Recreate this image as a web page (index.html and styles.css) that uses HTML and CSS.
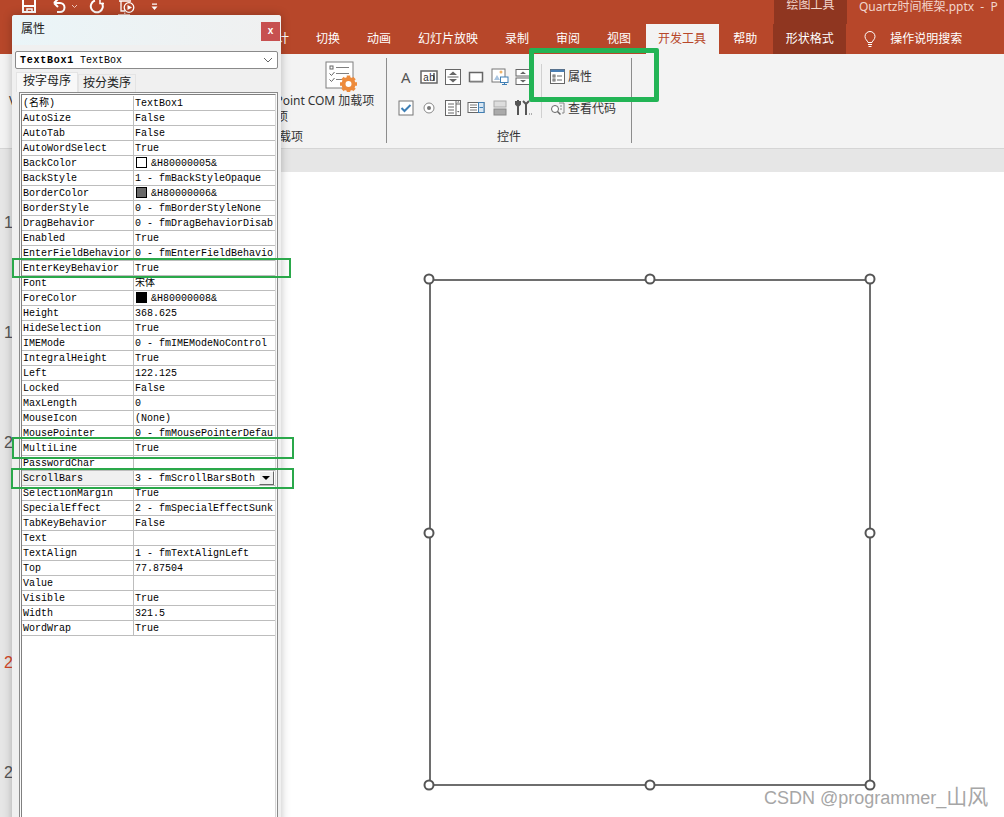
FILE: index.html
```html
<!DOCTYPE html>
<html>

<head>
  <title>Quartz时间框架.pptx - PowerPoint</title>
  <meta charset="UTF-8">
  <link rel="stylesheet" href="styles.css">
</head>

<body>
  <div class="title_bar">
    <svg class="qat_icons" viewBox="0 0 170 16" width="170" height="16">
      <g fill="none" stroke="#fff" stroke-width="2">
        <path d="M23 -2H35V12H23Z" />
        <path d="M23 6H35" />
        <path d="M27 12V9H32V12" stroke-width="1.5" />
        <path d="M54 3L58 -1M54 3L58 7M54 3H60a4.5 4.5 0 0 1 0 9H57" />
        <path d="M95 0.6A6 6 0 1 0 101.8 3" />
        <path d="M100 -1V3.5H104" stroke-width="1.5" />
        <path d="M72 5l2.5 2.5l2.5 -2.5" stroke="#f0c8bc" stroke-width="1" />
        <path d="M119 1H131M121 1V11H125" stroke-width="1.3" />
        <circle cx="129" cy="7.5" r="4.8" stroke-width="1.3" />
      </g>
      <path d="M127.5 5L132 7.5L127.5 10Z" fill="#fff" />
      <path d="M124 12.5h1.5v2.5h-1.5zM118 14h12v1h-12z" fill="#e0b8ac" />
      <path d="M152 3.5h5v1.2h-5zM151.5 6.5h6L154.5 10Z" fill="#fff" />
    </svg>
    <div class="context_title">绘图工具</div>
    <div class="file_title">Quartz时间框架.pptx &nbsp;-&nbsp; P</div>
  </div>

  <div class="tab_bar">
    <div class="tab">设计</div>
    <div class="tab">切换</div>
    <div class="tab">动画</div>
    <div class="tab">幻灯片放映</div>
    <div class="tab">录制</div>
    <div class="tab">审阅</div>
    <div class="tab">视图</div>
    <div class="tab tab_active">开发工具</div>
    <div class="tab">帮助</div>
    <div class="tab tab_context">形状格式</div>
    <svg class="bulb_icon" viewBox="0 0 12 17" width="12" height="17">
      <path d="M4 11.5C3.5 9.5 1 8.500 1 5.500a5 5 0 0 1 10 0C11 8.500 8.500 9.500 8 11.500Z" fill="none" stroke="#fff" />
      <path d="M4 13.500h4M4.500 15.500h3" stroke="#fff" />
    </svg>
    <div class="tab_search">操作说明搜索</div>
  </div>

  <div class="ribbon">
    <div class="group group_code">
      <div class="group_body"><span class="code_letter">V</span></div>
      <div class="group_label">代码</div>
    </div>

    <div class="group group_addin">
      <div class="group_body addin_body">
        <div class="big_button button_ppt">
          <div class="big_icon"></div>
          <div>PowerPoint<br>加载项</div>
        </div>
        <div class="big_button button_com">
          <svg class="big_icon" viewBox="0 0 32 32" width="32" height="32">
            <rect x="1" y="2" width="27" height="26" fill="#fff" stroke="#7f7f7f" />
            <rect x="5" y="6" width="3" height="3" fill="none" stroke="#666" />
            <path d="M11 7.500H24M11 13.500H24M11 19.500H18" stroke="#7f7f7f" />
            <path d="M4.500 13.500l2 2l3 -3.500M4.500 19.500l2 2l3 -3.500" fill="none" stroke="#666" />
            <circle cx="23.500" cy="24" r="5" fill="none" stroke="#ed8b3c" stroke-width="4" />
            <path d="M23.500 15.500v3M23.500 29.500v3M15 24h3M29 24h3M17.500 18l2 2M27.500 28l2 2M29.500 18l-2 2M19.500 28l-2 2" stroke="#ed8b3c" stroke-width="3.500" />
          </svg>
          <div>COM 加载项</div>
        </div>
      </div>
      <div class="group_label">加载项</div>
    </div>

    <div class="group group_controls">
      <div class="group_body">
        <div class="control_grid">
          <div class="control_icon control_letter">A</div>
          <svg class="control_icon" viewBox="0 0 18 18"><rect x="1" y="3" width="16" height="12" fill="#fff" stroke="#666" stroke-width="1.500" /><text x="3" y="12.500" class="icon_text">ab</text><path d="M14 5v8" stroke="#000" /></svg>
          <svg class="control_icon" viewBox="0 0 18 18"><rect x="1.500" y="1.500" width="15" height="15" fill="#fff" stroke="#666" /><path d="M5 7L9 3.500L13 7ZM5 11L9 14.500L13 11Z" fill="#666" /><path d="M3.500 9H14.500" stroke="#666" /></svg>
          <svg class="control_icon" viewBox="0 0 18 18"><rect x="2.500" y="4.500" width="13" height="9" fill="#fff" stroke="#666" stroke-width="1.500" /><path d="M3 14H16" stroke="#999" /></svg>
          <svg class="control_icon" viewBox="0 0 18 18"><rect x="1" y="1" width="13" height="13" fill="#fff" stroke="#777" /><path d="M3 12L6 7L9 12Z" fill="#a8c4e0" /><circle cx="10" cy="4" r="1.500" fill="#f0b46a" /><rect x="9.500" y="9" width="7.500" height="5.500" fill="#fff" stroke="#3f7fb5" /><path d="M11 16.500h5M13.500 14.500v2" stroke="#3f7fb5" /></svg>
          <svg class="control_icon" viewBox="0 0 18 18"><rect x="2" y="1.500" width="14" height="6.500" fill="#fff" stroke="#666" /><rect x="2" y="10" width="14" height="6.500" fill="#fff" stroke="#666" /><path d="M6 6L9 3.500L12 6ZM6 12L9 14.500L12 12Z" fill="#666" /></svg>

          <svg class="control_icon" viewBox="0 0 18 18"><rect x="2" y="2" width="14" height="14" fill="#fff" stroke="#777" /><path d="M4.500 9l3 3l6 -6" fill="none" stroke="#3f7fb5" stroke-width="2" /></svg>
          <svg class="control_icon" viewBox="0 0 18 18"><circle cx="9" cy="9" r="5" fill="#fff" stroke="#888" /><circle cx="9" cy="9" r="2" fill="#777" /></svg>
          <svg class="control_icon" viewBox="0 0 18 18"><rect x="1.500" y="1.500" width="15" height="15" fill="#fff" stroke="#666" /><path d="M4 5H10M4 8H10M4 11H10M4 14H10M12 1.500V16.500M12 5H16" stroke="#666" /><path d="M13 3.500h2.500L14.250 2ZM13 12h2.500l-1.250 1.500Z" fill="#666" /></svg>
          <svg class="control_icon" viewBox="0 0 18 18"><rect x="1" y="3.500" width="16" height="10" fill="#fff" stroke="#666" /><path d="M3 6H10M3 8.500H10M3 11H10" stroke="#777" /><rect x="11.500" y="3.500" width="5.500" height="10" fill="#d8e6f2" stroke="#3f7fb5" /><path d="M12.500 8.500h3.500" stroke="#3f7fb5" /></svg>
          <svg class="control_icon" viewBox="0 0 18 18"><rect x="3" y="2" width="12" height="6" fill="#ddd" stroke="#aaa" /><rect x="3" y="10" width="12" height="6" fill="#aaa" stroke="#888" /></svg>
          <svg class="control_icon" viewBox="0 0 18 18"><path d="M4 1v5M2 2v3l2 2l2 -2V2M4 7v9" fill="none" stroke="#555" stroke-width="2" /><path d="M9 2l3 3l3 -3M12 5v11" fill="none" stroke="#555" stroke-width="2" /><path d="M15 15h1M17 15h1" stroke="#666" /></svg>
        </div>
        <div class="command_sep"></div>
        <div class="command_list">
          <div class="command">
            <svg viewBox="0 0 15 15" width="15" height="15"><rect x="0.500" y="0.500" width="14" height="14" fill="#fff" stroke="#666" /><rect x="0.500" y="0.500" width="14" height="2.500" fill="#4a7fb5" /><rect x="3" y="6" width="2" height="2" fill="none" stroke="#666" /><rect x="3" y="10" width="2" height="2" fill="none" stroke="#666" /><path d="M7 7H12M7 11H12" stroke="#666" /></svg>
            <span>属性</span>
          </div>
          <div class="command">
            <svg viewBox="0 0 15 15" width="15" height="15"><circle cx="5" cy="8" r="3.500" fill="#fff" stroke="#666" /><path d="M7.500 10.500L10.500 13.500" stroke="#666" stroke-width="1.500" /><path d="M9 2H14V12H12M10 5H12M10 8H12" fill="none" stroke="#888" /></svg>
            <span>查看代码</span>
          </div>
        </div>
      </div>
      <div class="group_label">控件</div>
    </div>
  </div>

  <div class="workspace">
    <div class="slide_rail">
      <div class="slide_num">1</div>
      <div class="slide_num">1</div>
      <div class="slide_num">2</div>
      <div class="slide_num"></div>
      <div class="slide_num slide_num_current">2</div>
      <div class="slide_num">2</div>
    </div>
    <div class="workspace_main">
      <div class="top_strip"></div>
      <div class="stage"></div>
    </div>
  </div>

  <!-- selected textbox on the slide -->
  <div class="shape">
    <span class="handle h_tl"></span>
    <span class="handle h_tc"></span>
    <span class="handle h_tr"></span>
    <span class="handle h_ml"></span>
    <span class="handle h_mr"></span>
    <span class="handle h_bl"></span>
    <span class="handle h_bc"></span>
    <span class="handle h_br"></span>
  </div>

  <!-- floating properties window -->
  <div class="prop_window">
    <div class="prop_head">
      <span>属性</span>
      <div class="prop_close">x</div>
    </div>
    <div class="prop_combo">
      <span class="mono"><b>TextBox1</b> TextBox</span>
      <svg viewBox="0 0 10 6" width="10" height="6"><path d="M1 1L5 5L9 1" fill="none" stroke="#666" /></svg>
    </div>
    <div class="prop_tabs">
      <div class="prop_tab prop_tab_active">按字母序</div>
      <div class="prop_tab">按分类序</div>
    </div>
    <div class="prop_frame">
      <div class="prop_list">
        <div class="prop_row"><div class="prop_name">(名称)</div><div class="prop_value">TextBox1</div></div>
        <div class="prop_row"><div class="prop_name">AutoSize</div><div class="prop_value">False</div></div>
        <div class="prop_row"><div class="prop_name">AutoTab</div><div class="prop_value">False</div></div>
        <div class="prop_row"><div class="prop_name">AutoWordSelect</div><div class="prop_value">True</div></div>
        <div class="prop_row"><div class="prop_name">BackColor</div><div class="prop_value"><i class="swatch swatch_white"></i>&amp;H80000005&amp;</div></div>
        <div class="prop_row"><div class="prop_name">BackStyle</div><div class="prop_value">1 - fmBackStyleOpaque</div></div>
        <div class="prop_row"><div class="prop_name">BorderColor</div><div class="prop_value"><i class="swatch swatch_gray"></i>&amp;H80000006&amp;</div></div>
        <div class="prop_row"><div class="prop_name">BorderStyle</div><div class="prop_value">0 - fmBorderStyleNone</div></div>
        <div class="prop_row"><div class="prop_name">DragBehavior</div><div class="prop_value">0 - fmDragBehaviorDisab</div></div>
        <div class="prop_row"><div class="prop_name">Enabled</div><div class="prop_value">True</div></div>
        <div class="prop_row"><div class="prop_name">EnterFieldBehavior</div><div class="prop_value">0 - fmEnterFieldBehavio</div></div>
        <div class="prop_row"><div class="prop_name">EnterKeyBehavior</div><div class="prop_value">True</div></div>
        <div class="prop_row"><div class="prop_name">Font</div><div class="prop_value">宋体</div></div>
        <div class="prop_row"><div class="prop_name">ForeColor</div><div class="prop_value"><i class="swatch swatch_black"></i>&amp;H80000008&amp;</div></div>
        <div class="prop_row"><div class="prop_name">Height</div><div class="prop_value">368.625</div></div>
        <div class="prop_row"><div class="prop_name">HideSelection</div><div class="prop_value">True</div></div>
        <div class="prop_row"><div class="prop_name">IMEMode</div><div class="prop_value">0 - fmIMEModeNoControl</div></div>
        <div class="prop_row"><div class="prop_name">IntegralHeight</div><div class="prop_value">True</div></div>
        <div class="prop_row"><div class="prop_name">Left</div><div class="prop_value">122.125</div></div>
        <div class="prop_row"><div class="prop_name">Locked</div><div class="prop_value">False</div></div>
        <div class="prop_row"><div class="prop_name">MaxLength</div><div class="prop_value">0</div></div>
        <div class="prop_row"><div class="prop_name">MouseIcon</div><div class="prop_value">(None)</div></div>
        <div class="prop_row"><div class="prop_name">MousePointer</div><div class="prop_value">0 - fmMousePointerDefau</div></div>
        <div class="prop_row"><div class="prop_name">MultiLine</div><div class="prop_value">True</div></div>
        <div class="prop_row"><div class="prop_name">PasswordChar</div><div class="prop_value"></div></div>
        <div class="prop_row prop_row_selected"><div class="prop_name">ScrollBars</div><div class="prop_value">3 - fmScrollBarsBoth<div class="prop_drop"></div></div></div>
        <div class="prop_row"><div class="prop_name">SelectionMargin</div><div class="prop_value">True</div></div>
        <div class="prop_row"><div class="prop_name">SpecialEffect</div><div class="prop_value">2 - fmSpecialEffectSunk</div></div>
        <div class="prop_row"><div class="prop_name">TabKeyBehavior</div><div class="prop_value">False</div></div>
        <div class="prop_row"><div class="prop_name">Text</div><div class="prop_value"></div></div>
        <div class="prop_row"><div class="prop_name">TextAlign</div><div class="prop_value">1 - fmTextAlignLeft</div></div>
        <div class="prop_row"><div class="prop_name">Top</div><div class="prop_value">77.87504</div></div>
        <div class="prop_row"><div class="prop_name">Value</div><div class="prop_value"></div></div>
        <div class="prop_row"><div class="prop_name">Visible</div><div class="prop_value">True</div></div>
        <div class="prop_row"><div class="prop_name">Width</div><div class="prop_value">321.5</div></div>
        <div class="prop_row"><div class="prop_name">WordWrap</div><div class="prop_value">True</div></div>
      </div>
    </div>
  </div>

  <!-- green annotation boxes drawn over the screenshot -->
  <div class="mark mark_big"></div>
  <div class="mark mark_enter"></div>
  <div class="mark mark_multi"></div>
  <div class="mark mark_scroll"></div>

  <div class="watermark">CSDN @programmer_<span class="watermark_cjk">山风</span></div>
</body>

</html>
```

FILE: styles.css
```css
html,
body {
  width: 100%;
  height: 100%;
  margin: 0;
  padding: 0;
  overflow: hidden;
}

body {
  position: relative;
  display: flex;
  flex-direction: column;
  background-color: white;
  color: #333;
  font-family: "Noto Sans", "Noto Sans CJK SC", sans-serif;
  font-size: 12px;
}

/* title bar */
.title_bar {
  flex: 0 0 24px;
  display: flex;
  overflow: hidden;
  background-color: #b7472a;
}

.qat_icons {
  flex: 0 0 170px;
}

.context_title {
  margin-left: 604px;
  flex: 0 0 73px;
  text-align: center;
  line-height: 10px;
  color: #f2d5cc;
  background-color: #8f3620;
}

.file_title {
  padding-left: 12px;
  line-height: 14px;
  white-space: nowrap;
  color: #f2d5cc;
}

/* tabs */
.tab_bar {
  flex: 0 0 30px;
  display: flex;
  align-items: stretch;
  gap: 2px;
  padding-left: 252.5px;
  background-color: #b7472a;
  color: white;
  line-height: 30px;
}

.tab {
  padding: 0 12.5px;
  white-space: nowrap;
}

.tab_active {
  background-color: #f3f3f3;
  color: #b7472a;
}

.tab_context {
  margin-left: 1.5px;
  background-color: #8f3620;
}

.bulb_icon {
  margin: 7px 0 0 16px;
}

.tab_search {
  margin-left: 12px;
}

/* ribbon */
.ribbon {
  flex: 0 0 95px;
  box-sizing: border-box;
  display: flex;
  padding-top: 4px;
  background-color: #f3f3f3;
  border-bottom: 1px solid #d5d5d5;
}

.group {
  height: 85px;
  display: flex;
  flex-direction: column;
  box-sizing: border-box;
}

.group_body {
  flex: 0 0 71px;
  height: 71px;
  display: flex;
}

.group_label {
  height: 14px;
  line-height: 16px;
  text-align: center;
}

.group_code {
  flex: 0 0 184px;
}

.code_letter {
  margin: 34px 0 0 9px;
}

.group_addin {
  flex: 0 0 203px;
  border-right: 1px solid #8c8c8c;
}

.addin_body {
  padding: 2px 0 0 56px;
  gap: 6px;
  box-sizing: border-box;
}

.big_button {
  text-align: center;
  line-height: 16px;
  white-space: nowrap;
}

.button_ppt {
  width: 60px;
}

.button_com {
  width: 70px;
}

.big_icon {
  display: block;
  height: 32px;
  width: 32px;
  margin: 0 auto 1px;
}

.group_controls {
  flex: 0 0 245px;
  border-right: 1px solid #8c8c8c;
}

.control_grid {
  display: grid;
  grid-template-columns: repeat(6, 23.5px);
  grid-auto-rows: 31px;
  place-items: center;
  padding: 3px 0 0 7px;
  align-self: flex-start;
}

.control_icon {
  width: 18px;
  height: 18px;
}

.control_letter {
  text-align: center;
  line-height: 18px;
  font-size: 15px;
  color: #555;
}

.icon_text {
  font-family: "Liberation Mono", monospace;
  font-size: 10px;
  fill: #333;
}

.command_sep {
  width: 1px;
  height: 54px;
  margin: 6px 0 0 6px;
  background-color: #d0d0d0;
}

.command_list {
  padding: 2px 0 0 8px;
}

.command {
  display: flex;
  align-items: center;
  gap: 3px;
  height: 32px;
  font-size: 12px;
}

/* workspace */
.workspace {
  flex: 1;
  display: flex;
}

.slide_rail {
  flex: 0 0 12px;
  display: grid;
  grid-auto-rows: 110px;
  align-items: center;
  box-sizing: border-box;
  padding: 19px 0 0 4px;
  overflow: hidden;
  background-color: #e6e6e6;
  color: #555;
  font-family: "Liberation Sans", sans-serif;
  font-size: 16px;
}

.slide_num_current {
  color: #d24726;
}

.workspace_main {
  flex: 1;
  display: flex;
  flex-direction: column;
}

.top_strip {
  flex: 0 0 23px;
  background-color: #e6e6e6;
}

.stage {
  flex: 1;
  background-color: white;
}

/* selected shape */
.shape {
  position: absolute;
  left: 429px;
  top: 279px;
  width: 442px;
  height: 507px;
  box-sizing: border-box;
  border: 2px solid #6e6e6e;
}

.handle {
  position: absolute;
  width: 11px;
  height: 11px;
  box-sizing: border-box;
  border: 2px solid #555;
  border-radius: 50%;
  background-color: white;
  transform: translate(-50%, -50%);
}

.h_tl { left: -2px; top: -2px; }
.h_tc { left: 50%; top: -2px; }
.h_tr { left: calc(100% + 1px); top: -2px; }
.h_ml { left: -2px; top: 50%; }
.h_mr { left: calc(100% + 1px); top: 50%; }
.h_bl { left: -2px; top: calc(100% + 1px); }
.h_bc { left: 50%; top: calc(100% + 1px); }
.h_br { left: calc(100% + 1px); top: calc(100% + 1px); }

/* properties window */
.prop_window {
  position: absolute;
  left: 12px;
  top: 15px;
  width: 269px;
  height: 820px;
  display: flex;
  flex-direction: column;
  border-radius: 3px 3px 0 0;
  background-color: #f0f0f0;
  box-shadow: 0 0 10px rgba(0, 0, 0, 0.25);
}

.prop_head {
  flex: 0 0 30px;
  display: flex;
  justify-content: space-between;
  padding: 0 1px 0 9px;
  line-height: 28px;
  color: #222;
  border-radius: 3px 3px 0 0;
  background: linear-gradient(to right, #eaf5f8, #f0f0f0);
}

.prop_close {
  width: 19px;
  height: 19px;
  margin-top: 7px;
  background-color: #c75050;
  color: white;
  font: bold 10px/17px "Liberation Sans", sans-serif;
  text-align: center;
}

.prop_combo {
  height: 18px;
  margin: 6px 3px 0;
  padding: 0 4px;
  display: flex;
  align-items: center;
  justify-content: space-between;
  border: 1px solid #8a8a8a;
  border-radius: 2px;
  background-color: white;
  box-sizing: border-box;
}

.mono,
.prop_list {
  font-family: "Liberation Mono", "Noto Sans CJK SC", monospace;
  font-size: 10px;
  color: #000;
}

.mono b {
  letter-spacing: 0.75px;
}

.prop_tabs {
  display: flex;
  align-items: flex-end;
  height: 20px;
  margin: 3px 0 0 4px;
}

.prop_tab {
  height: 17px;
  padding: 0 4px;
  line-height: 16px;
  color: #222;
  border: 1px solid #e4e4e4;
  border-bottom: none;
}

.prop_tab_active {
  height: 19px;
  padding: 0 6px;
  line-height: 16px;
  background-color: #f8f8f8;
}

.prop_frame {
  flex: 1;
  margin: 0 3px 0 7px;
  padding: 1px;
  border: 1px solid #8a8a8a;
  border-bottom: none;
  background-color: #fafafa;
}

.prop_list {
  height: 100%;
  padding-top: 1px;
  box-sizing: border-box;
  border-top: 1px solid #808080;
  border-left: 1px solid #808080;
  border-right: 1px solid #d8d8d8;
  background-color: white;
}

.prop_row {
  height: 15px;
  box-sizing: border-box;
  display: grid;
  grid-template-columns: 112px auto;
  border-bottom: 1px solid #bdbdbd;
  line-height: 15px;
  white-space: nowrap;
}

.prop_name {
  padding-left: 1px;
  overflow: hidden;
  border-right: 1px solid #bdbdbd;
}

.prop_value {
  position: relative;
  display: flex;
  align-items: flex-start;
  padding-left: 1px;
  overflow: hidden;
}

.prop_row_selected .prop_name {
  background-color: #f0f0f0;
}

.swatch {
  flex: 0 0 11px;
  height: 11px;
  box-sizing: border-box;
  margin: 1px 4px 0 1px;
  border: 1px solid #000;
}

.swatch_white { background-color: white; }
.swatch_gray { background-color: #696969; }
.swatch_black { background-color: black; }

.prop_drop {
  position: absolute;
  right: 1px;
  top: 0;
  width: 15px;
  height: 14px;
  box-sizing: border-box;
  background-color: #f0f0f0;
  border: 1px solid;
  border-color: #fff #666 #666 #fff;
}

.prop_drop::after {
  content: "";
  position: absolute;
  left: 2px;
  top: 4px;
  border-width: 4px 4px 0;
  border-style: solid;
  border-color: black transparent transparent;
}

/* green annotations */
.mark {
  position: absolute;
  box-sizing: border-box;
  border: 2px solid #2aa84a;
}

.mark_big {
  left: 529px;
  top: 48px;
  width: 130px;
  height: 54px;
  border: 5px solid #22b455;
  border-radius: 2px;
}

.mark_enter {
  left: 12px;
  top: 258px;
  width: 279px;
  height: 20px;
}

.mark_multi {
  left: 12px;
  top: 437px;
  width: 282px;
  height: 22px;
}

.mark_scroll {
  left: 11px;
  top: 468px;
  width: 283px;
  height: 21px;
}

.watermark {
  position: absolute;
  left: 764px;
  top: 784px;
  font-family: "Liberation Sans", "Noto Sans CJK SC", sans-serif;
  font-size: 18px;
  line-height: 26px;
  color: #a6a6a6;
  white-space: nowrap;
}

.watermark_cjk {
  font-size: 21px;
}
```
